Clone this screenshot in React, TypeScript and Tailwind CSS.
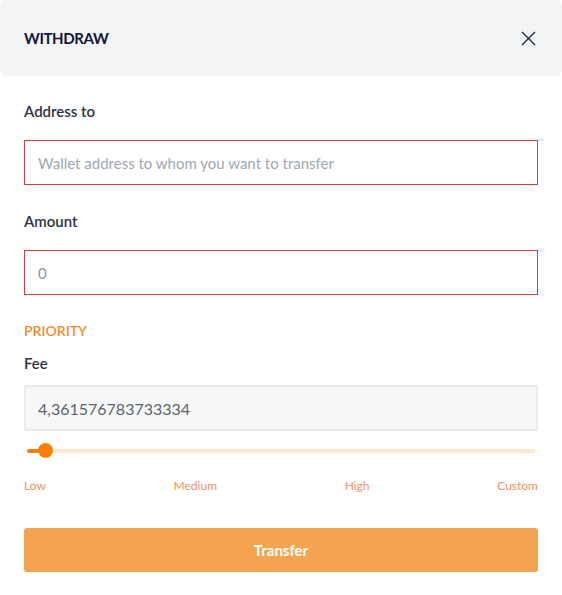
export default function App() {
  const labels = ["Low", "Medium", "High", "Custom"]
  return (
    <div className="min-h-[595px] w-[562px] bg-white font-['Lato',sans-serif]">
      <div className="rounded-md bg-white">
        {/* Header */}
        <div className="flex h-[76px] items-center justify-between rounded-md bg-[#f3f4f6] pl-6 pr-[26px]">
          <h2 className="text-[15px] font-bold tracking-tight text-[#12123a]">WITHDRAW</h2>
          <button className="text-[#1e2a4a]">
            <svg width="15" height="15" viewBox="0 0 15 15" fill="none" stroke="currentColor" strokeWidth="1.4">
              <path d="M1 1L14 14M14 1L1 14" />
            </svg>
          </button>
        </div>

        <div className="px-6 pt-[23px]">
          <label className="block h-6 text-[15px] font-semibold leading-6 text-[#2d3340]">Address to</label>
          <input
            className="mt-[17px] block h-[45px] w-full border border-[#e03b3b] px-[13px] text-[15px] text-[#333] outline-none placeholder:text-[#a0a7b4]"
            placeholder="Wallet address to whom you want to transfer"
          />

          <label className="mt-6 block h-6 text-[15px] font-semibold leading-6 text-[#2d3340]">Amount</label>
          <input
            className="mt-[17px] block h-[45px] w-full border border-[#e03b3b] px-[13px] text-[15px] text-[#8a93a3] outline-none"
            defaultValue="0"
          />

          <div className="mt-6 h-6 text-[14px] font-semibold leading-6 text-[#f28a2c]">PRIORITY</div>
          <label className="mt-2 block h-6 text-[15px] font-semibold leading-6 text-[#2d3340]">Fee</label>
          <input
            className="mt-[10px] block h-[46px] w-full border-2 border-[#ececec] bg-[#f7f7f7] px-3 text-[16px] text-[#5c6370] outline-none"
            defaultValue="4,361576783733334"
            readOnly
          />

          {/* Slider */}
          <div className="relative mt-3 h-[15px]">
            <div className="absolute left-[3px] right-[3px] top-[5.5px] h-1 rounded-full bg-[#fde8d0]" />
            <div className="absolute left-[3px] top-[5.5px] h-1 w-[18px] rounded-full bg-[#ff8000]" />
            <div className="absolute left-[14px] top-0 h-[15px] w-[15px] rounded-full bg-[#ff8000]" />
          </div>

          <div className="mt-[19px] flex justify-between text-[12px] leading-[18px] text-[#f29063]">
            {labels.map((l) => (
              <span key={l}>{l}</span>
            ))}
          </div>

          <button className="mt-[33px] flex h-11 w-full items-center justify-center rounded-[3px] bg-[#f4a451] text-[15px] font-bold text-white">
            Transfer
          </button>
        </div>
      </div>
    </div>
  )
}
